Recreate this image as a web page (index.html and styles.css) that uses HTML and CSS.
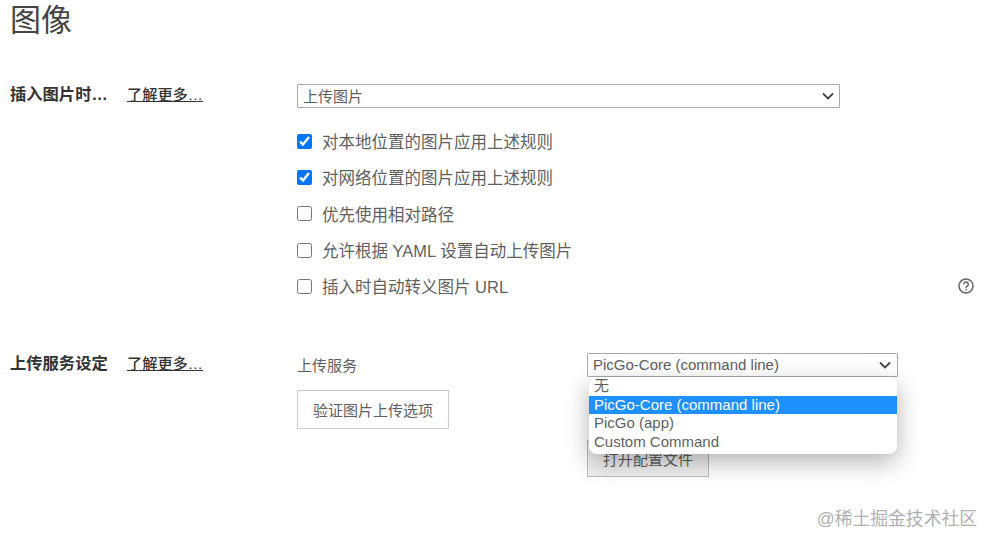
FILE: index.html
```html
<!DOCTYPE html>
<html lang="zh-CN">
<head>
  <meta charset="UTF-8" />
  <title>图像</title>
  <link rel="stylesheet" href="styles.css">
</head>
<body>
  <div class="page">
    <h1 class="page-title">图像</h1>

    <section class="setting insert-setting">
      <div class="setting-label">
        <span class="label-name">插入图片时…</span>
        <a class="learn-more" href="#">了解更多…</a>
      </div>
      <div class="setting-body">
        <div class="select insert-select">
          <span>上传图片</span>
          <svg class="chevron" viewBox="0 0 12 8" width="12" height="8" fill="none" stroke="#444" stroke-width="1.8"><path d="M1 1.5l5 5 5-5"/></svg>
        </div>
        <ul class="checks">
          <li class="check"><input type="checkbox" checked><span>对本地位置的图片应用上述规则</span></li>
          <li class="check"><input type="checkbox" checked><span>对网络位置的图片应用上述规则</span></li>
          <li class="check"><input type="checkbox"><span>优先使用相对路径</span></li>
          <li class="check"><input type="checkbox"><span>允许根据 YAML 设置自动上传图片</span></li>
          <li class="check">
            <input type="checkbox"><span>插入时自动转义图片 URL</span>
            <svg class="help-icon" viewBox="0 0 16 16" width="16" height="16" fill="none" stroke="#666" stroke-width="1.5">
              <circle cx="8" cy="8" r="7"/>
              <path d="M5.7 6.3a2.3 2.3 0 1 1 3.6 1.9c-.8.5-1.3 1-1.3 2"/>
              <path d="M8 11.2v1.5"/>
            </svg>
          </li>
        </ul>
      </div>
    </section>

    <section class="setting upload-setting">
      <div class="setting-label">
        <span class="label-name">上传服务设定</span>
        <a class="learn-more" href="#">了解更多…</a>
      </div>
      <div class="setting-body upload-body">
        <div class="upload-left">
          <div class="service-label">上传服务</div>
          <button class="btn verify-btn">验证图片上传选项</button>
        </div>
        <div class="upload-right">
          <div class="select service-select">
            <span>PicGo-Core (command line)</span>
            <svg class="chevron" viewBox="0 0 12 8" width="12" height="8" fill="none" stroke="#444" stroke-width="1.8"><path d="M1 1.5l5 5 5-5"/></svg>
          </div>
          <button class="btn config-btn">打开配置文件</button>
          <ul class="dropdown">
            <li>无</li>
            <li class="active">PicGo-Core (command line)</li>
            <li>PicGo (app)</li>
            <li>Custom Command</li>
          </ul>
        </div>
      </div>
    </section>
  </div>
  <div class="watermark">@稀土掘金技术社区</div>
</body>
</html>
```

FILE: styles.css
```css
:root {
  --text-color: #5f5f5f;
  --label-color: #333;
  --border-color: #aaa;
  --active-color: #1e90ff;
}

html, body {
  height: 100%;
}

body {
  margin: 0;
  background: #fff;
  color: var(--text-color);
  font-family: "Liberation Sans", "Noto Sans CJK SC", sans-serif;
  overflow: hidden;
}

.page {
  padding: 0 20px 0 10px;
}

.page-title {
  margin: 0;
  padding-top: 2px;
  height: 82px;
  font-size: 31px;
  line-height: 38px;
  font-weight: 400;
  color: #444;
}

.setting {
  display: flex;
}

.setting-label {
  width: 287px;
  flex: none;
  display: flex;
  align-items: baseline;
  line-height: 20px;
}

.label-name {
  width: 117px;
  flex: none;
  font-size: 16.3px;
  font-weight: 700;
  color: var(--label-color);
}

.learn-more {
  color: var(--label-color);
  font-size: 15.2px;
  font-weight: 500;
}

.setting-body {
  flex: 1;
}

.select {
  display: flex;
  align-items: center;
  justify-content: space-between;
  box-sizing: border-box;
  height: 24px;
  padding: 0 5px 2px;
  background: #fff;
  border: 1px solid var(--border-color);
  border-radius: 1px;
  font-size: 15px;
}

.insert-select {
  width: 543px;
}

.chevron {
  flex: none;
  margin-top: 2px;
}

.service-select .chevron {
  margin-right: 1px;
}

.checks {
  list-style: none;
  margin: 15px 0 0;
  padding: 0;
}

.check {
  display: flex;
  align-items: center;
  height: 36.3px;
  font-size: 16.5px;
}

.check input {
  width: 15px;
  height: 15px;
  margin: 0 10px 0 0;
  accent-color: #0075ff;
}

.help-icon {
  margin-left: auto;
  margin-right: 1px;
}

.upload-setting {
  margin-top: 49px;
}

.upload-body {
  display: flex;
}

.upload-left {
  width: 290px;
  flex: none;
}

.service-label {
  font-size: 15px;
  line-height: 20px;
  margin-top: 3px;
}

.btn {
  display: block;
  border: 1px solid #ccc;
  background: #fff;
  color: var(--text-color);
  font: inherit;
  font-size: 15px;
}

.verify-btn {
  width: 152px;
  height: 39px;
  margin-top: 14px;
}

.upload-right {
  position: relative;
  width: 311px;
}

.service-select {
  width: 311px;
}

.config-btn {
  width: 122px;
  height: 37px;
  margin-top: 63px;
  background: #f0f0f0;
  border-color: #bbb;
}

.dropdown {
  position: absolute;
  top: 24px;
  left: 2px;
  width: 308px;
  margin: 0;
  padding: 0 0 3px;
  list-style: none;
  background: #fff;
  border-radius: 8px;
  box-shadow: 0 8px 24px rgba(0, 0, 0, 0.3);
  font-size: 15px;
  line-height: 18.5px;
  overflow: hidden;
}

.dropdown li {
  padding-left: 5px;
}

.dropdown .active {
  background: var(--active-color);
  color: #fff;
}

.watermark {
  position: absolute;
  right: 18px;
  top: 509px;
  color: #b0b0b0;
  font-size: 17.8px;
  line-height: 20px;
}
```
